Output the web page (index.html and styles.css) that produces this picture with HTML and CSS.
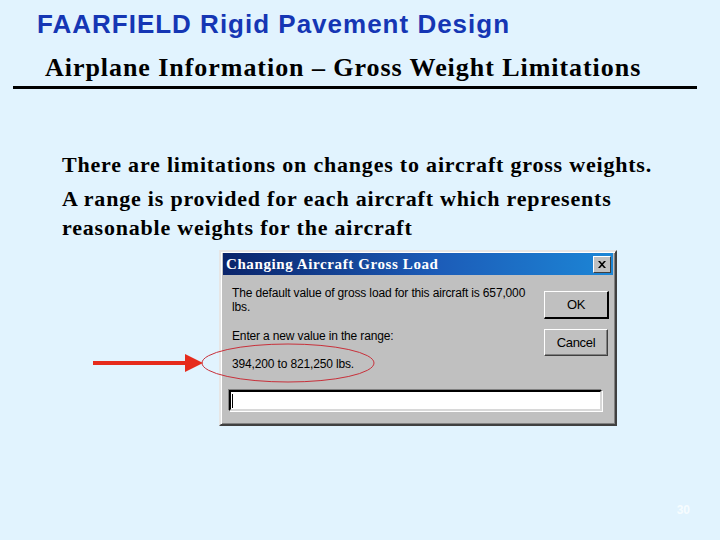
FILE: index.html
```html
<!DOCTYPE html>
<html>
<head>
<meta charset="utf-8">
<link rel="stylesheet" href="styles.css">
</head>
<body>
<div class="slide">
  <h1 class="title">FAARFIELD Rigid Pavement Design</h1>
  <h2 class="subtitle">Airplane Information – Gross Weight Limitations</h2>
  <div class="rule"></div>
  <p class="para first">There are limitations on changes to aircraft gross weights.</p>
  <p class="para second">A range is provided for each aircraft which represents<br>reasonable weights for the aircraft</p>

  <div class="figure">
    <div class="dialog">
      <div class="titlebar">
        <span class="titletext">Changing Aircraft Gross Load</span>
        <span class="closebtn">
          <svg width="8" height="7" viewBox="0 0 8 7"><path d="M0 0h2l2 2.2L6 0h2L5 3.5 8 7H6L4 4.8 2 7H0l3-3.5z" fill="#000"/></svg>
        </span>
      </div>
      <div class="dbody">
        <div class="dtext">
          <div class="l1">The default value of gross load for this aircraft is 657,000<br>lbs.</div>
          <div class="l2">Enter a new value in the range:</div>
          <div class="l3">394,200 to 821,250 lbs.</div>
        </div>
        <div class="dbuttons">
          <div class="btn ok">OK</div>
          <div class="btn cancel">Cancel</div>
        </div>
      </div>
      <div class="inputrow"><div class="input"><span class="caret"></span></div></div>
    </div>
    <svg class="annot" width="720" height="180" viewBox="0 0 720 180">
      <ellipse cx="288" cy="113" rx="86" ry="19" fill="none" stroke="#c8303a" stroke-width="1"/>
      <line x1="93" y1="113" x2="188" y2="113" stroke="#e62b1c" stroke-width="4"/>
      <polygon points="185,104 203,113 185,122" fill="#e62b1c"/>
    </svg>
  </div>
  <div class="pagenum">30</div>
</div>
</body>
</html>
```
FILE: styles.css
```css
html, body {
  margin: 0;
  padding: 0;
  background: #e1f3fe;
}
.slide {
  width: 720px;
  height: 540px;
  background: #e1f3fe;
  overflow: hidden;
}
.title {
  margin: 0;
  padding: 9px 0 0 37px;
  font: bold 26px/30px "Liberation Sans", Arial, sans-serif;
  color: #1536b4;
  letter-spacing: 1px;
}
.subtitle {
  margin: 14px 0 0 0;
  padding-left: 45px;
  font: bold 26px/30px "Liberation Serif", "Times New Roman", serif;
  color: #000;
  letter-spacing: 0.95px;
}
.rule {
  margin: 3px 0 0 13px;
  width: 684px;
  height: 3px;
  background: #000;
}
.para {
  margin: 0;
  padding-left: 62px;
  font: bold 22px/30px "Liberation Serif", "Times New Roman", serif;
  color: #000;
  letter-spacing: 0.8px;
}
.para.first { margin-top: 61px; }
.para.second { margin-top: 4px; line-height: 29px; }

.figure {
  position: relative;
  margin-top: 8px;
  height: 180px;
}
.annot {
  position: absolute;
  left: 0;
  top: 0;
  pointer-events: none;
}
.dialog {
  margin-left: 219px;
  width: 390px;
  height: 170px;
  background: #c0c0c0;
  border: 2px solid;
  border-color: #e6e6e6 #404040 #404040 #e6e6e6;
  box-shadow: inset 1px 1px 0 #ffffff, inset -1px -1px 0 #808080;
  padding: 1px 2px;
  display: flex;
  flex-direction: column;
}
.titlebar {
  height: 22px;
  background: linear-gradient(to right, #0a246a 0%, #1c5cb8 55%, #1c86d6 100%);
  display: flex;
  align-items: center;
  justify-content: space-between;
  padding: 0 2px 0 3px;
}
.titletext {
  font: bold 15px/20px "Liberation Serif", "Times New Roman", serif;
  color: #fff;
  letter-spacing: 0.6px;
}
.closebtn {
  width: 16px;
  height: 15px;
  background: #c0c0c0;
  border: 1px solid;
  border-color: #fff #404040 #404040 #fff;
  display: flex;
  align-items: center;
  justify-content: center;
}
.dbody {
  display: flex;
  justify-content: space-between;
  padding: 11px 4px 0 9px;
  font: 12px/14px "Liberation Sans", Arial, sans-serif;
  color: #000;
  letter-spacing: -0.15px;
}
.dtext .l2 { margin-top: 15px; }
.dtext .l3 { margin-top: 14px; }
.dbuttons {
  display: flex;
  flex-direction: column;
  padding-top: 5px;
}
.btn {
  width: 62px;
  height: 25px;
  border: 1px solid;
  border-color: #fff #404040 #404040 #fff;
  box-shadow: inset -1px -1px 0 #808080;
  display: flex;
  align-items: center;
  justify-content: center;
  font: 13px "Liberation Sans", Arial, sans-serif;
  letter-spacing: -0.3px;
}
.btn.ok {
  border: 1px solid #fff;
  border-right: 2px solid #000;
  border-bottom: 2px solid #000;
  box-shadow: none;
}
.btn.cancel { margin-top: 10px; }
.inputrow {
  padding: 0 0 0 6px;
  margin-top: 19px;
}
.input {
  width: 368px;
  height: 17px;
  background: #fff;
  border: 2px solid;
  border-color: #000 #d8d8d8 #d8d8d8 #000;
  box-shadow: -1px -1px 0 #808080, 1px 1px 0 #fff;
  display: flex;
  align-items: center;
  padding-left: 1px;
}
.caret {
  width: 1px;
  height: 14px;
  background: #000;
}
.pagenum {
  margin-top: 73px;
  text-align: right;
  padding-right: 30px;
  font: bold 12px "Liberation Sans", Arial, sans-serif;
  color: #f6fcff;
}
```
